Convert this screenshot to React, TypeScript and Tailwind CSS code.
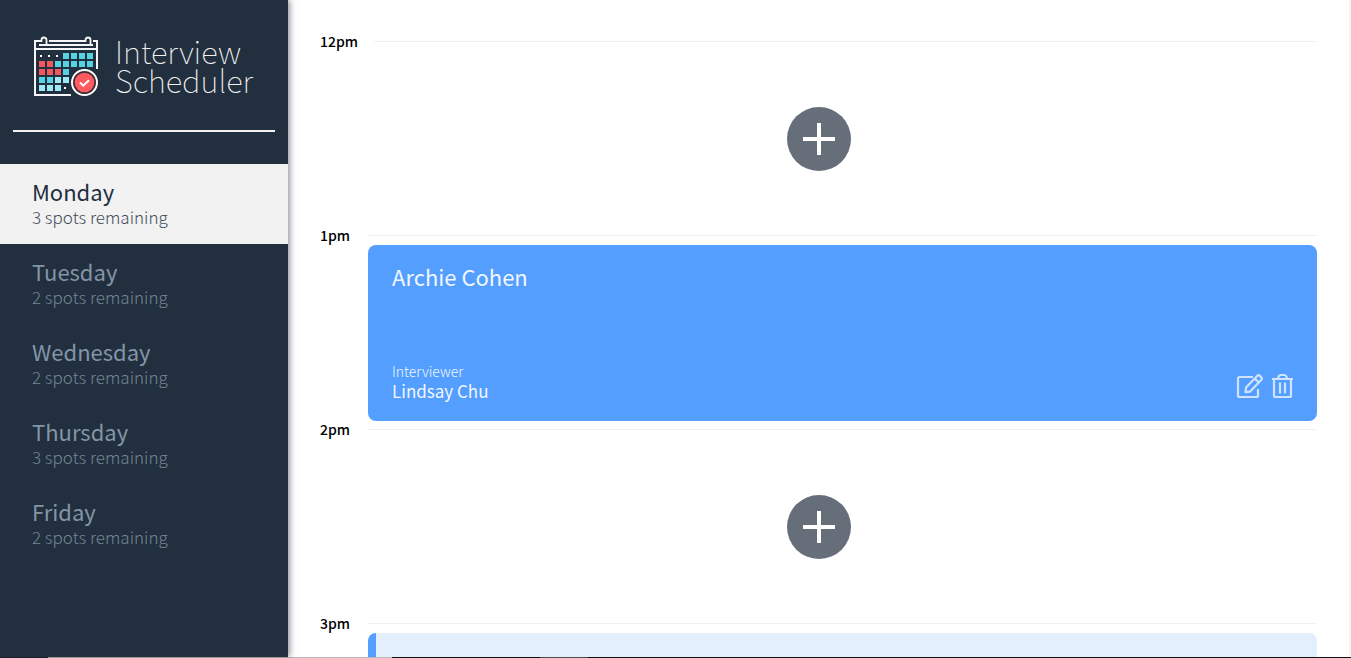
import React from "react";

type Day = { name: string; spots: number };
type Slot = {
  time: string;
  student?: string;
  interviewer?: string;
  form?: boolean;
};

const days: Day[] = [
  { name: "Monday", spots: 3 },
  { name: "Tuesday", spots: 2 },
  { name: "Wednesday", spots: 2 },
  { name: "Thursday", spots: 3 },
  { name: "Friday", spots: 2 },
];

const slots: Slot[] = [
  { time: "12pm" },
  { time: "1pm", student: "Archie Cohen", interviewer: "Lindsay Chu" },
  { time: "2pm" },
  { time: "3pm", form: true },
];

// One string per calendar row: w dot, t teal, r red, p pale, . empty
const cells = ["wwwtttt", "rrttttt", "rrrt...", "ttpp...", "pppw..."];
const fills: Record<string, string> = { t: "#55d3e3", r: "#f0585e", p: "#9deaf4" };

function Logo() {
  return (
    <svg width="66" height="62" viewBox="0 0 66 62" fill="none" className="shrink-0" aria-hidden="true">
      <path d="M8 5H2V59H38M16 5H52M60 5H64V33" stroke="#f4f6f8" strokeWidth="2" />
      <path d="M2 13H64" stroke="#f4f6f8" strokeWidth="2" />
      <path d="M6 9H60M13.500 9V4a2.500 2.500 0 0 0-5 0V6M52.500 6V4a2.500 2.500 0 0 1 5 0V9" stroke="#f4f6f8" strokeWidth="1.800" />
      {cells.map((row, y) =>
        row.split("").map((c, x) => {
          if (c === ".") return null;
          const left = 5 + x * 8;
          const top = 17 + y * 8;
          return c === "w" ? (
            <rect key={`${x}-${y}`} x={left + 2} y={top + 2} width="2" height="2" fill="#fff" />
          ) : (
            <rect key={`${x}-${y}`} x={left + 1} y={top} width="6" height="6" fill={fills[c]} />
          );
        }),
      )}
      <circle cx="51.5" cy="46.5" r="14" fill="#222f3e" />
      <circle cx="51.5" cy="46.5" r="12.5" fill="#3a2f38" stroke="#fff" strokeWidth="2" />
      <circle cx="51.5" cy="46.5" r="9.8" fill="#ff5a60" />
      <path d="M47 46.500l3.200 3.200 5.800-5.500" stroke="#fff" strokeWidth="2" />
    </svg>
  );
}

function EditIcon() {
  return (
    <svg width="28" height="26" viewBox="0 0 28 26" fill="none" stroke="currentColor" strokeWidth="2.2" strokeLinejoin="round" aria-hidden="true">
      <path d="M18 4H4.500A1.500 1.500 0 0 0 3 5.500V22.500A1.500 1.500 0 0 0 4.500 24H21.500A1.500 1.500 0 0 0 23 22.500V16" />
      <path d="M11 14.500L22.200 2.900a2 2 0 0 1 2.800 0l1.200 1.300a2 2 0 0 1 0 2.800L15.100 18.600L10.500 19.200ZM19.700 5.500L23.700 9.600" />
    </svg>
  );
}

function TrashIcon() {
  return (
    <svg width="22" height="26" viewBox="0 0 22 26" fill="none" stroke="currentColor" strokeWidth="2.2" strokeLinejoin="round" aria-hidden="true">
      <path d="M1 6H22M3 6V22.500A1.500 1.500 0 0 0 4.500 24H18.500A1.500 1.500 0 0 0 20 22.500V6M6.500 6L8 3Q8.500 2 9.500 2H13.500Q14.500 2 15 3L16.500 6M9 9.500V20.500M14 9.500V20.500" />
    </svg>
  );
}

function Sidebar() {
  return (
    <aside className="z-10 flex w-72 shrink-0 flex-col bg-[#222f3e] shadow-[2px_0_6px_rgba(34,47,62,0.5)]">
      <a href="#" className="flex items-start gap-4 pr-4 pl-[33px] pt-9 text-[#f2f2f2]">
        <Logo />
        <span className="text-[31px] leading-[29px] font-thin">
          Interview
          <br />
          Scheduler
        </span>
      </a>
      <hr className="mx-[13px] my-8 border-t-2 border-[#f2f2f2]" />
      <nav aria-label="Days">
        <ul>
          {days.map((day, i) => (
            <li key={day.name}>
              <button
                type="button"
                aria-pressed={i === 0}
                className={`flex h-20 w-full flex-col justify-center px-8 pb-0.5 text-left ${
                  i === 0 ? "bg-[#f2f2f2] text-[#222f3e]" : "text-[#8395a7]"
                }`}
              >
                <span className="text-[22px] leading-7">{day.name}</span>
                <span className="text-[17px] leading-6 font-light opacity-85">{day.spots} spots remaining</span>
              </button>
            </li>
          ))}
        </ul>
      </nav>
    </aside>
  );
}

function Appointment({ slot }: { slot: Slot }) {
  return (
    <article>
      <header className="mb-0.5 flex h-4 items-center gap-4">
        <h4 className="min-w-8 text-sm leading-4 font-medium text-black">{slot.time}</h4>
        <hr className="grow border-t border-[#f0f1f2]" />
      </header>
      {slot.student ? (
        <div className="ml-12 flex h-44 flex-col justify-between rounded-lg bg-[#539eff] px-6 pt-4 pb-5 text-[#f2f7ff]">
          <h2 className="text-[22px] leading-[30px]">{slot.student}</h2>
          <div className="flex items-end justify-between">
            <div>
              <h4 className="text-sm leading-5 font-light">Interviewer</h4>
              <h3 className="text-[17px] leading-5">{slot.interviewer}</h3>
            </div>
            <div className="flex gap-2 pb-0.5 text-[#cfe3fd]">
              <button type="button" aria-label="Edit">
                <EditIcon />
              </button>
              <button type="button" aria-label="Delete">
                <TrashIcon />
              </button>
            </div>
          </div>
        </div>
      ) : slot.form ? (
        <div className="ml-12 h-44 rounded-lg border-l-8 border-[#539eff] bg-[#e3effd]" />
      ) : (
        <div className="flex h-44 items-center justify-center">
          <button type="button" aria-label="Add" className="flex size-16 items-center justify-center rounded-full bg-[#666e7a]">
            <svg width="32" height="32" viewBox="0 0 32 32" stroke="#fff" strokeWidth="4" aria-hidden="true">
              <path d="M16 0V32M0 16H32" />
            </svg>
          </button>
        </div>
      )}
    </article>
  );
}

export default function App() {
  return (
    <div className="flex h-screen flex-col overflow-hidden bg-white font-['Noto_Sans_CJK_JP','Open_Sans',sans-serif]">
      <main className="flex min-h-0 grow">
        <Sidebar />
        <section className="grow overflow-hidden border-r-2 border-[#f3f3f3] px-8 pt-[33px]">
          {slots.map((slot) => (
            <Appointment key={slot.time} slot={slot} />
          ))}
        </section>
      </main>
      <div className="flex h-px shrink-0" aria-hidden="true">
        <div className="w-12 bg-[#1b1f26]" />
        <div className="w-[344px] bg-[#b9b9b9]" />
        <div className="w-[148px] bg-[#101114]" />
        <div className="w-12 bg-[#4a4c50]" />
        <div className="grow bg-[#101114]" />
      </div>
    </div>
  );
}
